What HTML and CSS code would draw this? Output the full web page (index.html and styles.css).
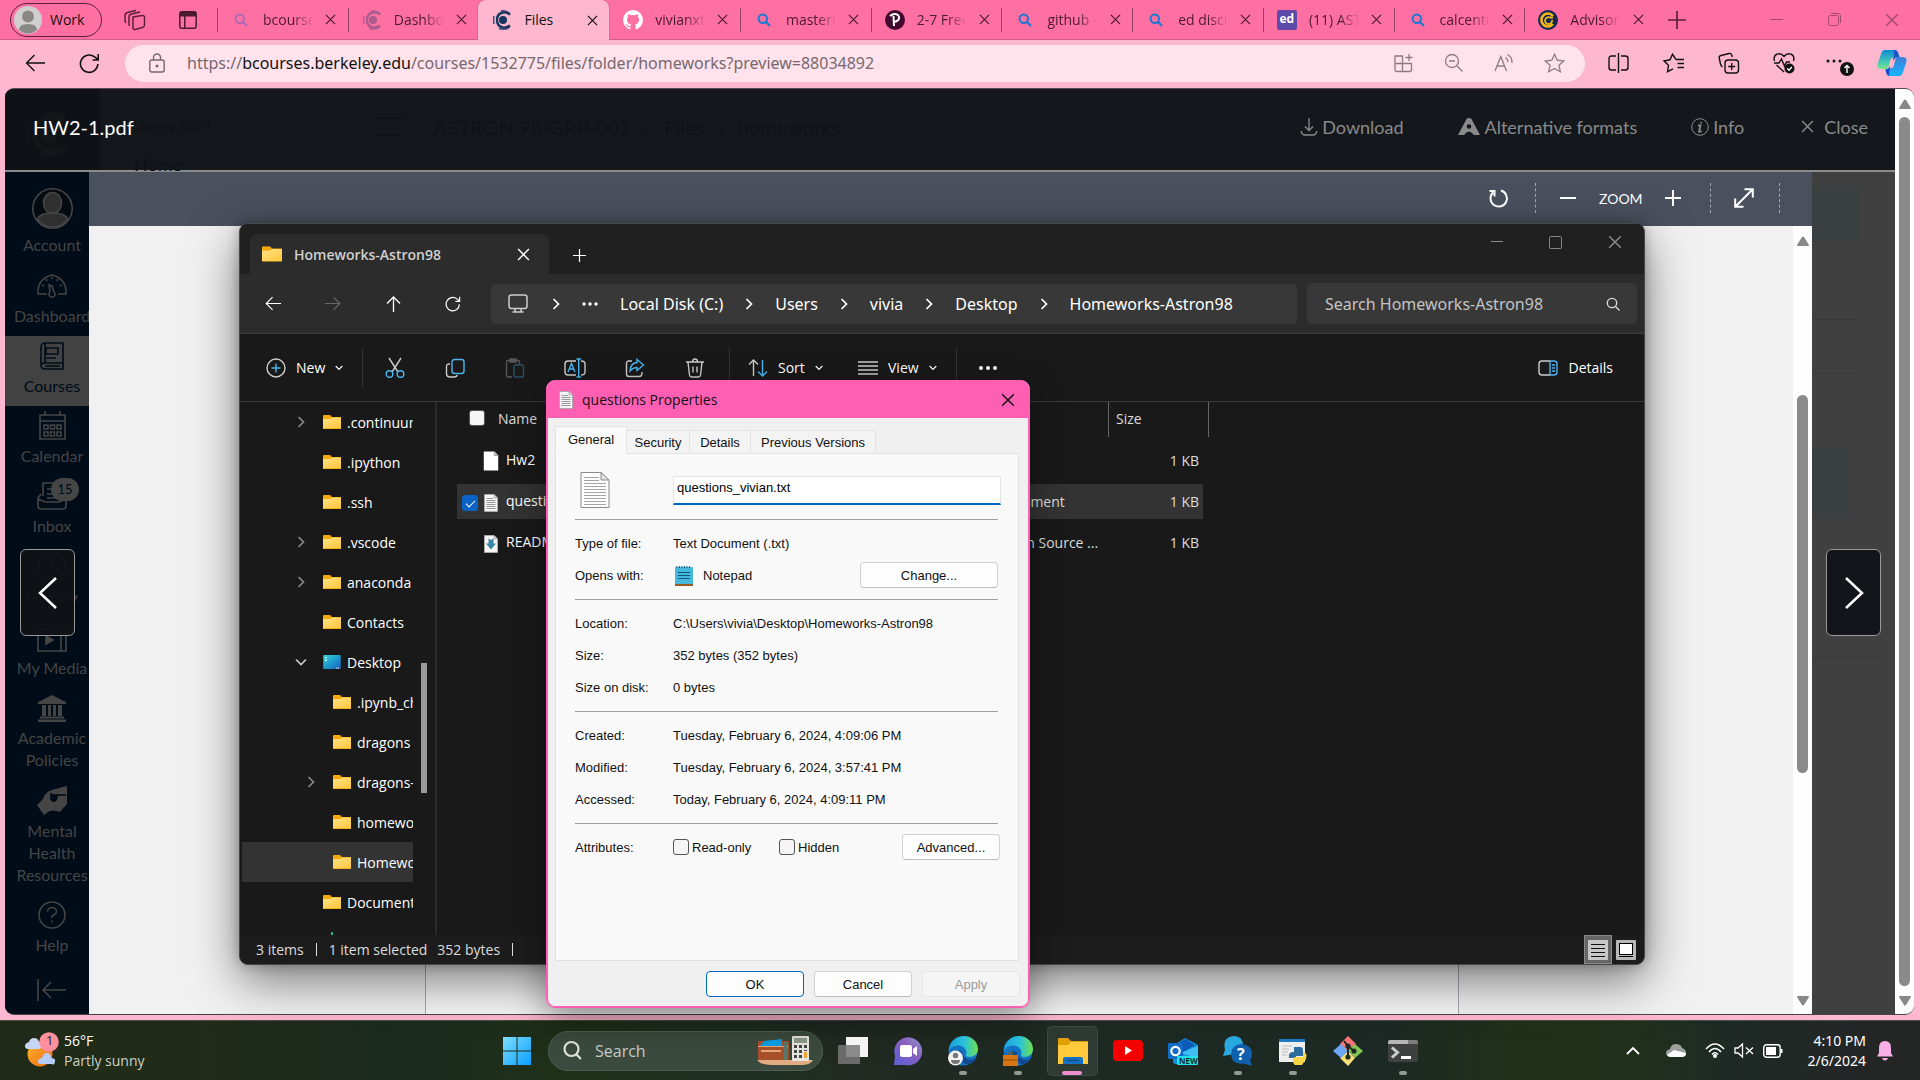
FILE: index.html
```html
<!DOCTYPE html>
<html lang="en">
<head>
<meta charset="utf-8">
<title>Files</title>
<link rel="stylesheet" href="styles.css">
</head>
<body>
<svg class="defs" aria-hidden="true">
  <defs>
    <linearGradient id="gFolder" x1="0" y1="0" x2="1" y2="1"><stop offset="0" stop-color="#ffe08a"/><stop offset="1" stop-color="#ffc83a"/></linearGradient>
    <linearGradient id="gDesk" x1="0" y1="0" x2="1" y2="1"><stop offset="0" stop-color="#35d3dc"/><stop offset="1" stop-color="#0d62c0"/></linearGradient>
    <linearGradient id="gWin" x1="0" y1="0" x2="1" y2="1"><stop offset="0" stop-color="#7fdfff"/><stop offset="1" stop-color="#0a9dff"/></linearGradient>
    <linearGradient id="gEdge" x1="0" y1="0" x2="1" y2="0"><stop offset="0" stop-color="#1a9fe0"/><stop offset=".55" stop-color="#2cc3d8"/><stop offset="1" stop-color="#6fe04e"/></linearGradient>
    <linearGradient id="gChat" x1="1" y1="0" x2="0" y2="1"><stop offset="0" stop-color="#8d97c9"/><stop offset=".4" stop-color="#8a5fc0"/><stop offset="1" stop-color="#5b5fd6"/></linearGradient>
    <linearGradient id="gCop1" x1="0" y1="0" x2="0" y2="1"><stop offset="0" stop-color="#0f8bd6"/><stop offset=".6" stop-color="#3fc6b8"/><stop offset="1" stop-color="#7fe38a"/></linearGradient>
    <linearGradient id="gCop2" x1="0" y1="0" x2="0" y2="1"><stop offset="0" stop-color="#3f7fd8"/><stop offset="1" stop-color="#16b3ff"/></linearGradient>
    <linearGradient id="gSun" x1="0" y1="0" x2="1" y2="1"><stop offset="0" stop-color="#fbb62c"/><stop offset="1" stop-color="#ef6a14"/></linearGradient>
  </defs>
  <symbol id="x" viewBox="0 0 12 12"><path d="M1 1 11 11M11 1 1 11" fill="none" stroke="currentColor" stroke-width="1.3"/></symbol>
  <symbol id="plus" viewBox="0 0 16 16"><path d="M8 0V16M0 8H16" fill="none" stroke="currentColor" stroke-width="1.5"/></symbol>
  <symbol id="mag" viewBox="0 0 14 14"><circle cx="5.8" cy="5.8" r="4.2" fill="none" stroke="currentColor" stroke-width="2"/><path d="M9 9 13 13" stroke="currentColor" stroke-width="2.2"/></symbol>
  <symbol id="cal" viewBox="0 0 18 20"><circle cx="10" cy="10" r="4" fill="currentColor"/><path d="M17 4.500Q14 2 10 2.500 4 3.500 4 10T10 17.500Q14 18 17 15.500" fill="none" stroke="currentColor" stroke-width="2.400"/><path d="M8 .8Q15 .3 17 4.500M6 18.500Q12 20.500 16.500 17M1 6Q0 10 1 14" fill="none" stroke="currentColor" stroke-width="1.600" opacity=".8"/></symbol>
  <symbol id="chevR" viewBox="0 0 8 12"><path d="M1.500 1 6.500 6 1.500 11" fill="none" stroke="currentColor" stroke-width="1.700"/></symbol>
  <symbol id="chevD" viewBox="0 0 8 6"><path d="M.7 1 4 4.300 7.300 1" fill="none" stroke="currentColor" stroke-width="1.200"/></symbol>
  <symbol id="left" viewBox="0 0 20 18"><path d="M20 9H1.500M9.500 1 1.500 9 9.500 17" fill="none" stroke="currentColor" stroke-width="1.400"/></symbol>
  <symbol id="reload" viewBox="0 0 20 20"><path d="M18 10.500A8.300 8.300 0 1 1 14.800 3.600L18 6M18.300 1V6.600H13" fill="none" stroke="currentColor" stroke-width="1.500"/></symbol>
  <symbol id="folder" viewBox="0 0 18 14"><path d="M0 1A1 1 0 0 1 1 0H7L9 2H18V14H0Z" fill="#f5a80c"/><path d="M0 4H7L9 2.500H18V13.200H0Z" fill="url(#gFolder)"/></symbol>
  <symbol id="doc" viewBox="0 0 14 18"><path d="M.5.5H10L13.500 4V17.500H.5Z" fill="#f4f4f4" stroke="#aaa"/><path d="M10 .5V4H13.500" fill="#ddd" stroke="#999" stroke-width=".7"/></symbol>
  <symbol id="lines" viewBox="0 0 14 18"><use href="#doc"/><path d="M2.500 4.500H9M2.500 6.500H11.500M2.500 8.500H11.500M2.500 10.500H11.500M2.500 12.500H11.500M2.500 14.500H11.500" stroke="#999"/></symbol>
  <symbol id="up" viewBox="0 0 12 10"><path d="M5 1Q6 0 7 1L12 9Q12 10 11 10H1Q0 10 0 9Z" fill="#888"/></symbol>
  <symbol id="edge" viewBox="0 0 30 30"><circle cx="15" cy="15" r="14.500" fill="#1273c4"/><path d="M1 15C1 6 8 0 16 0S30 6 30 13C30 18 26 21 21 21 17 21 18 18 18.500 17 18 11 13 9 9 9.500 5 10 2 12 1 15Z" fill="url(#gEdge)"/><path d="M10 14C8 22 14 29 21 28 25 27 28 24 28 22 22 26 14 22 14 16Z" fill="#12488f"/></symbol>
</svg>

<main class="browser">
  <header class="tabstrip">
    <div class="left-tools">
      <button class="profile"><svg width="28" height="28" viewBox="0 0 28 28"><circle cx="14" cy="14" r="14" fill="#d1cfcd"/><circle cx="14" cy="10.500" r="6" fill="#8a8886"/><path d="M5 24Q5 18 14 18T23 24Q14 31 5 24Z" fill="#8a8886"/></svg>Work</button>
      <button class="ic" aria-label="Workspaces"><svg width="22" height="22" viewBox="0 0 22 22" fill="none" stroke="#5b1f37" stroke-width="1.500"><path d="M9 8 18 6.500Q20.500 6 20.500 8.500V16Q20.500 18 18.500 18.500L11 20.500Q9 21 9 18.500ZM5.500 17Q5 16 5 15V8Q5 5.500 7.500 5L16 3M2 14Q1 13 1 11V6.500Q1 4 3.500 3.400L12 1.500"/></svg></button>
      <button class="ic" aria-label="Tab actions"><svg width="18" height="18" viewBox="0 0 18 18"><rect x=".8" y=".8" width="16.400" height="16.400" rx="2" fill="none" stroke="#4b1a2f" stroke-width="1.500"/><path d="M1 1H17V5.500H1ZM5 5H6.500V17H5Z" fill="#4b1a2f"/></svg></button>
    </div>
    <nav class="tabs" aria-label="Tabs">
      <div class="tab"><svg class="fav dim" viewBox="0 0 14 14"><use href="#mag"/></svg><span class="tt">bcourses</span><button aria-label="Close tab"><svg><use href="#x"/></svg></button></div>
      <div class="tab"><svg class="fav big dimc" viewBox="0 0 18 20"><use href="#cal"/></svg><span class="tt">Dashboard</span><button aria-label="Close tab"><svg><use href="#x"/></svg></button></div>
      <div class="tab active"><svg class="fav big navy" viewBox="0 0 18 20"><use href="#cal"/></svg><span class="tt">Files</span><button aria-label="Close tab"><svg><use href="#x"/></svg></button></div>
      <div class="tab"><svg class="fav big" viewBox="0 0 20 20"><circle cx="10" cy="10" r="10" fill="#fff"/><path d="M7.300 20V17Q4.500 17.500 3.500 15.500 3 14.500 2.300 14.200 4 14 5 15.500 6 16.500 7.500 16 7.600 15 8.200 14.500 4 14 4 9.800 4 8 5 6.900 4.700 5.600 5.200 4.300 6.500 4.400 7.700 5.300 10 4.800 12.400 5.300 13.500 4.400 14.900 4.300 15.400 5.600 15 6.900 16.100 8 16.100 9.800 16 14 11.800 14.500 12.700 15.200 12.700 16.500V20Z" fill="#ff70a2"/></svg><span class="tt">vivianxtra</span><button aria-label="Close tab"><svg><use href="#x"/></svg></button></div>
      <div class="tab"><svg class="fav blue" viewBox="0 0 14 14"><use href="#mag"/></svg><span class="tt">mastering</span><button aria-label="Close tab"><svg><use href="#x"/></svg></button></div>
      <div class="tab"><svg class="fav big" viewBox="0 0 20 20"><circle cx="10" cy="10" r="10" fill="#43082f"/><path d="M5 6Q9 2.500 13 5 16 9 11 11.500H9M8.500 6 9 16" fill="none" stroke="#fff" stroke-width="2"/></svg><span class="tt">2-7 Free R</span><button aria-label="Close tab"><svg><use href="#x"/></svg></button></div>
      <div class="tab"><svg class="fav blue" viewBox="0 0 14 14"><use href="#mag"/></svg><span class="tt">github - S</span><button aria-label="Close tab"><svg><use href="#x"/></svg></button></div>
      <div class="tab"><svg class="fav blue" viewBox="0 0 14 14"><use href="#mag"/></svg><span class="tt">ed discuss</span><button aria-label="Close tab"><svg><use href="#x"/></svg></button></div>
      <div class="tab"><span class="fav big ed">ed</span><span class="tt">(11) ASTR</span><button aria-label="Close tab"><svg><use href="#x"/></svg></button></div>
      <div class="tab"><svg class="fav blue" viewBox="0 0 14 14"><use href="#mag"/></svg><span class="tt">calcentral</span><button aria-label="Close tab"><svg><use href="#x"/></svg></button></div>
      <div class="tab"><svg class="fav big" viewBox="0 0 20 20"><circle cx="10" cy="10" r="10" fill="#12294d"/><path d="M15 6A6.500 6.500 0 1 0 15 14" fill="none" stroke="#f5b81c" stroke-width="2.600"/><path d="M14 10A3.500 3.500 0 1 1 12 7.500H15" fill="none" stroke="#f5b81c" stroke-width="1.800"/></svg><span class="tt">Advisors</span><button aria-label="Close tab"><svg><use href="#x"/></svg></button></div>
    </nav>
    <div class="winctl">
      <button aria-label="New tab" class="newtab"><svg width="18" height="18"><use href="#plus"/></svg></button>
      <button aria-label="Minimize"><svg width="13" height="13" viewBox="0 0 13 13"><path d="M0 6.500H13" stroke="currentColor"/></svg></button>
      <button aria-label="Restore"><svg width="13" height="13" viewBox="0 0 13 13" fill="none" stroke="currentColor"><rect x=".5" y="2.500" width="10" height="10" rx="2"/><path d="M3 .5H10Q12.500.5 12.500 3V10"/></svg></button>
      <button aria-label="Close"><svg width="14" height="14"><use href="#x"/></svg></button>
    </div>
  </header>

  <div class="toolbar">
    <button aria-label="Back"><svg width="20" height="18"><use href="#left"/></svg></button>
    <button aria-label="Refresh"><svg width="21" height="21"><use href="#reload"/></svg></button>
    <div class="address">
      <svg width="16" height="20" viewBox="0 0 16 20" fill="none" stroke="#76696e" stroke-width="1.400"><rect x=".8" y="7" width="14.400" height="12" rx="2"/><path d="M4.500 7V4.500A3.500 3.500 0 0 1 11.500 4.500V7"/><circle cx="8" cy="13" r=".8" fill="#76696e"/></svg>
      <span class="url">https://<b>bcourses.berkeley.edu</b>/courses/1532775/files/folder/homeworks?preview=88034892</span>
      <button aria-label="App available"><svg width="20" height="20" viewBox="0 0 20 20"><path d="M1 3H8.500V18.500H3Q1 18.500 1 16.500ZM1 10.500H17.500V16.500Q17.500 18.500 15.500 18.500H8.500M15 1V8M11.500 4.500H18.500"/></svg></button>
      <button aria-label="Zoom out"><svg width="20" height="20" viewBox="0 0 20 20"><circle cx="8" cy="8" r="6.500"/><path d="M13 13 18.500 18.500M5 8H11"/></svg></button>
      <button aria-label="Read aloud"><svg width="20" height="20" viewBox="0 0 20 20"><path d="M1 18 6.800 3.500 12.500 18M3 13H10.500M11.500 4.500Q14 6 14 9M13.500 1.500Q18.500 4.500 18 10"/></svg></button>
      <button aria-label="Favorite"><svg width="21" height="20" viewBox="0 0 21 20"><path d="M10.500 1.300 13.200 7.200 19.800 8 15 12.300 16.300 18.700 10.500 15.500 4.700 18.700 6 12.300 1.200 8 7.800 7.200Z"/></svg></button>
    </div>
    <div class="ext">
      <button aria-label="Split screen"><svg width="21" height="20" viewBox="0 0 21 20"><path d="M8 3H3.500Q1 3 1 5.500V14.500Q1 17 3.500 17H8M13 3H17.500Q20 3 20 5.500V14.500Q20 17 17.500 17H13M10.500 0V20"/></svg></button>
      <button aria-label="Favorites"><svg width="22" height="20" viewBox="0 0 22 20"><path d="M13 6.500H21M14.500 10.500H21M14.500 14.500H21M13 6.500 9.500 1.300 7 6.800 1 8 5.500 12.300 4.500 18.700 10 15.800"/></svg></button>
      <button aria-label="Collections"><svg width="22" height="22" viewBox="0 0 22 22"><rect x="7" y="8" width="13.500" height="13" rx="3"/><path d="M13.700 11V18M10.200 14.500H17.200M4.500 15Q3 14 2.500 12L1.200 6Q.8 4 3 3.500L11 1.500Q13 1 13.800 3L14.200 5"/></svg></button>
      <button aria-label="Browser essentials"><svg width="22" height="22" viewBox="0 0 22 22"><path d="M1.500 9Q0 4 4 2.200 8 .8 11 4.500 14 .8 18 2.200 22 4 20.500 9M3.500 13 11 20M1 11H6L8.500 7 11.500 14 13.500 10H17"/><circle cx="16.500" cy="16.500" r="5" fill="#111" stroke="none"/><path d="M14.200 16.500 16 18.200 18.800 15" stroke="#fff"/></svg></button>
      <button aria-label="Settings and more"><svg width="28" height="26" viewBox="0 0 28 26"><g fill="#111" stroke="none"><circle cx="3" cy="11" r="1.500"/><circle cx="9" cy="11" r="1.500"/><circle cx="15" cy="11" r="1.500"/><circle cx="22" cy="19" r="7"/></g><path d="M22 23V15.500M19.500 18 22 15.500 24.500 18" stroke="#fff"/></svg></button>
      <button aria-label="Copilot"><svg width="30" height="28" viewBox="0 0 30 28"><g stroke="none"><path d="M8 1H17Q21 1 20 5L18 9Q14 8 13 12L11 20H4Q-1 20 1 14L4 5Q5 1 8 1Z" fill="url(#gCop1)"/><path d="M22 27H13Q9 27 10 23L12 19Q16 20 17 16L19 8H26Q31 8 29 14L26 23Q25 27 22 27Z" fill="url(#gCop2)"/><path d="M17 1Q21 1 21.500 5L22.500 8H19L16 12Q17 7 17 1Z" fill="#1b55c8"/><path d="M8.500 20H11L13 17 12 27Q9 26 8.500 20Z" fill="#174bd0"/></g></svg></button>
    </div>
  </div>

  <section class="page">
    <div class="content">
      <div class="pvhead">
        <div class="ghost" aria-hidden="true"><svg class="gl" width="44" height="46" viewBox="0 0 18 20"><use href="#cal"/></svg><i>Spring 2024</i><em></em><span>ASTRON 98-GRP-001</span><span>›</span><span>Files</span><span>›</span><span>homeworks</span><small>Home</small></div>
        <h1>HW2-1.pdf</h1>
        <a href="#"><svg width="18" height="18" viewBox="0 0 18 18" fill="none" stroke="currentColor" stroke-width="1.300"><path d="M9 0V12M5 8.500 9 12.500 13 8.500M1 13Q2 17 5 17H13Q16 17 17 13"/></svg>Download</a>
        <a href="#" class="alt"><svg width="22" height="17" viewBox="0 0 22 17"><path d="M8.500 1Q11-1 13.500 1L22 17H16Q11 10 6 17H0Z" fill="currentColor"/><circle cx="11" cy="8.500" r="2.300" fill="#14181c"/></svg>Alternative formats</a>
        <a href="#" class="info"><svg width="18" height="18" viewBox="0 0 18 18" fill="none" stroke="currentColor"><circle cx="9" cy="9" r="8.300"/><path d="M7 7.500H9.500L8 13.500H10.500M10 4V5.500" stroke-width="1.800"/></svg>Info</a>
        <button class="close"><svg width="13" height="13"><use href="#x"/></svg>Close</button>
      </div>
      <div class="pvbody">
        <nav class="side" aria-label="Global"><ul>
          <li class="acc"><svg width="41" height="41" viewBox="0 0 41 41"><circle cx="20.500" cy="20.500" r="19.700" fill="#060b12" stroke="#454545" stroke-width="1.600"/><ellipse cx="20.500" cy="15" rx="9" ry="10.500" fill="#303030"/><path d="M5 31Q8 25 20.500 25T36 31Q30 39 20.500 39T5 31Z" fill="#303030"/></svg><a href="#">Account</a></li>
          <li><svg width="30" height="22" viewBox="0 0 30 22"><path d="M4 20H1Q0 5 15 1 30 5 29 20H21M4 20H10M15 12 12 11 13 18A3 3 0 1 0 17 18ZM5 11 7 12M9 5 10 7M15 3V5M21 5 20 7M25 11 23 12"/></svg><a href="#">Dashboard</a></li>
          <li class="on"><svg width="24" height="28" viewBox="0 0 24 28"><path d="M23 1H5Q1 1 1 5V23Q1 27 5 27H23V21H5Q1 21 1 24M23 1V27M6 6H18V12H6ZM6 16H16M5 24H20M5 1V21"/></svg><a href="#">Courses</a></li>
          <li><svg width="27" height="29" viewBox="0 0 27 29"><path d="M1 4H26V28H1ZM1 10H26M6 0V5M21 0V5M5 14H9V18H5ZM11.500 14H15.500V18H11.500ZM18 14H22V18H18ZM5 21H9V25H5ZM11.500 21H15.500V25H11.500ZM18 21H22V25H18Z"/></svg><a href="#">Calendar</a></li>
          <li><svg width="30" height="28" viewBox="0 0 30 28"><path d="M6 14V1H23V14M1 16 4 12M1 15V24Q1 27 4 27H26Q29 27 29 24V15L26 12M1 17 8 20H22L29 17M10 7H15M10 12H19M10 16H19"/></svg><span class="badge">15</span><a href="#">Inbox</a></li>
          <li><svg width="30" height="30" viewBox="0 0 30 30"><circle cx="15" cy="15" r="14"/><path d="M15 6V15L21 19"/></svg><a href="#">History</a></li>
          <li><svg width="30" height="29" viewBox="0 0 30 29"><path d="M1 6H24V28H1ZM24 6H29V28H24M5 6V1H14V6"/><path d="M9 13 16 17 9 21Z" fill="currentColor"/></svg><a href="#">My Media</a></li>
          <li><svg width="28" height="27" viewBox="0 0 28 27"><path d="M0 7 14 0 28 7V9H0ZM4 10H8V21H4ZM10 10H13V21H10ZM15 10H18V21H15ZM20 10H24V21H20ZM2 21.500H26V23.500H2ZM0 24.500H28V27H0Z" fill="currentColor" stroke="none"/></svg><a href="#">Academic Policies</a></li>
          <li><svg width="30" height="29" viewBox="0 0 30 29"><path d="M30 0V18L23 26Q15 23 11 26L7 29 0 19 6 13Q8 6 15 4L22 2ZM14 8V14Q17 18 20 14V9H30" fill="currentColor" stroke="none"/><path d="M14 7V13Q17 18 20 12V9H29" stroke="#000c18"/></svg><a href="#">Mental Health Resources</a></li>
          <li><svg width="28" height="28" viewBox="0 0 28 28"><circle cx="14" cy="14" r="13"/><path d="M9.500 10.500Q10 6.500 14 6.500T18.500 10.500Q18.500 13 14 15V17M14 19.500V21.500"/></svg><a href="#">Help</a></li>
          <li class="col"><svg width="30" height="22" viewBox="0 0 30 22"><path d="M1 0V22M29 11H6M14 3 6 11 14 19"/></svg></li>
        </ul></nav>
        <div class="viewer">
          <div class="vbar">
            <button aria-label="Rotate"><svg width="21" height="21" viewBox="0 0 21 21"><path d="M13 2.500A8.200 8.200 0 1 1 5 4.500M1.500 3H6.500V8.500"/></svg></button>
            <button aria-label="Zoom out" class="s"><svg width="16" height="16" viewBox="0 0 16 16"><path d="M0 8H16"/></svg></button>
            <span>ZOOM</span>
            <button aria-label="Zoom in" class="zin"><svg width="16" height="16" viewBox="0 0 16 16"><path d="M0 8H16M8 0V16"/></svg></button>
            <button aria-label="Full screen" class="s e"><svg width="20" height="20" viewBox="0 0 20 20"><path d="M2 18 18 2M10.500 1.200H18.800V9.500M1.200 10.500V18.800H9.500"/></svg></button>
          </div>
          <div class="vbody"><div class="sheet"></div><div class="sb in"><svg width="12" height="10"><use href="#up"/></svg><i></i><svg class="dn" width="12" height="10"><use href="#up"/></svg></div></div>
        </div>
        <div class="behind"><i></i><u></u><u></u><i class="b2"></i><u></u></div>
        <button class="pn prev" aria-label="Previous"><svg width="20" height="34" viewBox="0 0 20 34"><path d="M18 2 2 17 18 32"/></svg></button>
        <button class="pn next" aria-label="Next"><svg width="20" height="34" viewBox="0 0 20 34"><path d="M2 2 18 17 2 32"/></svg></button>
      </div>
    </div>
    <div class="sb out"><svg width="12" height="10"><use href="#up"/></svg><i></i><svg class="dn" width="12" height="10"><use href="#up"/></svg></div>
  </section>
</main>

<section class="explorer">
  <div class="ex-title">
    <div class="ex-tab"><svg width="20" height="16" viewBox="0 0 18 14"><use href="#folder"/></svg><b>Homeworks-Astron98</b><button aria-label="Close tab"><svg width="13" height="13"><use href="#x"/></svg></button></div>
    <button aria-label="New tab" class="ex-new"><svg width="13" height="13"><use href="#plus"/></svg></button>
    <div class="ex-ctl"><button aria-label="Minimize"><svg width="12" height="12" viewBox="0 0 12 12"><path d="M0 5.500H12" stroke="currentColor"/></svg></button><button aria-label="Maximize"><svg width="13" height="13" viewBox="0 0 13 13"><rect x=".5" y=".5" width="12" height="12" rx="1" fill="none" stroke="currentColor"/></svg></button><button aria-label="Close"><svg width="14" height="14"><use href="#x"/></svg></button></div>
  </div>
  <div class="ex-nav">
    <button aria-label="Back"><svg width="16" height="15" viewBox="0 0 20 18"><use href="#left"/></svg></button>
    <button aria-label="Forward" disabled><svg class="flip" width="16" height="15" viewBox="0 0 20 18"><use href="#left"/></svg></button>
    <button aria-label="Up"><svg width="15" height="16" viewBox="0 0 15 16"><path d="M7.500 16V1M1 7.500 7.500 1 14 7.500" fill="none" stroke="currentColor" stroke-width="1.300"/></svg></button>
    <button aria-label="Refresh"><svg width="16" height="16"><use href="#reload"/></svg></button>
    <div class="crumbs">
      <svg width="20" height="19" viewBox="0 0 20 19" fill="none" stroke="#ccc" stroke-width="1.500"><rect x="1" y="1" width="18" height="13.500" rx="2.500"/><path d="M7 15V18M13 15V18M4.500 18H15.500"/></svg>
      <svg class="c"><use href="#chevR"/></svg><svg class="dots" width="16" height="4" viewBox="0 0 16 4" fill="#fff"><circle cx="2" cy="2" r="1.700"/><circle cx="8" cy="2" r="1.700"/><circle cx="14" cy="2" r="1.700"/></svg><span>Local Disk (C:)</span><svg class="c"><use href="#chevR"/></svg><span>Users</span><svg class="c"><use href="#chevR"/></svg><span>vivia</span><svg class="c"><use href="#chevR"/></svg><span>Desktop</span><svg class="c"><use href="#chevR"/></svg><span>Homeworks-Astron98</span>
    </div>
    <label class="ex-search"><input type="text" placeholder="Search Homeworks-Astron98" aria-label="Search Homeworks-Astron98"><svg width="14" height="14" viewBox="0 0 14 14" fill="none" stroke="#ddd" stroke-width="1.300"><circle cx="6" cy="6" r="4.700"/><path d="M9.500 9.500 13.500 13.500"/></svg></label>
  </div>
  <div class="ex-cmd">
    <button class="new"><svg width="20" height="20" viewBox="0 0 20 20"><circle cx="10" cy="10" r="9" stroke="#ccc"/><path class="a" d="M10 5.500V14.500M5.500 10H14.500"/></svg>New<svg class="d"><use href="#chevD"/></svg></button>
    <i class="sep"></i>
    <button class="q" aria-label="Cut"><svg width="20" height="20" viewBox="0 0 20 20"><path d="M4 0 13 14M16 0 7 14"/><circle class="a" cx="4.500" cy="16" r="3.300"/><circle class="a" cx="15.500" cy="16" r="3.300"/></svg></button>
    <button class="q" aria-label="Copy"><svg width="20" height="20" viewBox="0 0 20 20"><path d="M5 6H4Q1.500 6 1.500 8.500V15.500Q1.500 19 5 19H9Q12 19 12 17"/><rect class="a" x="7" y="1.500" width="12" height="14" rx="2.500"/></svg></button>
    <button class="q" aria-label="Paste" disabled><svg width="20" height="20" viewBox="0 0 20 20"><path d="M7 19H3Q1.500 19 1.500 17.500V4Q1.500 2.500 3 2.500H13Q14.500 2.500 14.500 4V6M5 1H11V4H5Z"/><rect class="a" x="9" y="7" width="9.500" height="12" rx="1.500"/></svg></button>
    <button class="q" aria-label="Rename"><svg width="22" height="20" viewBox="0 0 22 20"><path d="M12 3H4Q1 3 1 6V14Q1 17 4 17H12M17 3Q21 3 21 6V14Q21 17 17 17"/><path class="a" d="M12.500 1H17M14.700 1V19M12.500 19H17M4 14 7.500 5.500 11 14M5.200 11H9.800"/></svg></button>
    <button class="q" aria-label="Share"><svg width="20" height="20" viewBox="0 0 20 20"><path d="M7 3H4Q1.500 3 1.500 5.500V16Q1.500 18.500 4 18.500H14Q17 18.500 17 15V14"/><path class="a" d="M12 1.500 18.500 7 12 12.500V9.500Q8 9.500 5 13 5.500 5 12 4.500Z"/></svg></button>
    <button class="q" aria-label="Delete"><svg width="20" height="20" viewBox="0 0 20 20"><path d="M1 4H19M3 4 4.500 17Q4.800 19 6.500 19H13.500Q15.200 19 15.500 17L17 4M7.500 4Q7.500 1 10 1T12.500 4M8 8.500V14.500M12 8.500V14.500"/></svg></button>
    <i class="sep two"></i>
    <button class="sort"><svg width="20" height="18" viewBox="0 0 20 18"><path d="M5.500 17V1M1 5.500 5.500 1 10 5.500"/><path class="a" d="M14.500 1V17M10 12.500 14.500 17 19 12.500"/></svg>Sort<svg class="d"><use href="#chevD"/></svg></button>
    <button class="view"><svg width="20" height="14" viewBox="0 0 20 14"><path d="M0 1H20M0 5H20M0 9H20M0 13H20"/></svg>View<svg class="d"><use href="#chevD"/></svg></button>
    <i class="sep"></i>
    <button class="more" aria-label="More"><svg width="20" height="6" viewBox="0 0 20 6"><g fill="#fff" stroke="none"><circle cx="3" cy="3" r="2"/><circle cx="10" cy="3" r="2"/><circle cx="17" cy="3" r="2"/></g></svg></button>
    <button class="det"><svg width="20" height="16" viewBox="0 0 20 16"><path d="M12 1H4Q1 1 1 4V12Q1 15 4 15H12"/><path class="a" d="M12 1H16Q19 1 19 4V12Q19 15 16 15H12ZM14 5H17M14 8H17M14 11H17"/></svg>Details</button>
  </div>
  <div class="ex-main">
    <ul class="tree">
      <li class="p"><svg class="c"><use href="#chevR"/></svg><svg class="f"><use href="#folder"/></svg>.continuum</li>
      <li><svg class="f"><use href="#folder"/></svg>.ipython</li>
      <li><svg class="f"><use href="#folder"/></svg>.ssh</li>
      <li class="p"><svg class="c"><use href="#chevR"/></svg><svg class="f"><use href="#folder"/></svg>.vscode</li>
      <li class="p"><svg class="c"><use href="#chevR"/></svg><svg class="f"><use href="#folder"/></svg>anaconda</li>
      <li><svg class="f"><use href="#folder"/></svg>Contacts</li>
      <li class="p"><svg class="c open" viewBox="0 0 8 12"><use href="#chevR"/></svg><svg class="f" viewBox="0 0 20 16"><rect width="20" height="16" rx="1" fill="url(#gDesk)"/><path d="M2 3H4M2 6H4M15 15H16M17 15H18" stroke="#fff" stroke-width="1.500"/></svg>Desktop</li>
      <li class="k"><svg class="f"><use href="#folder"/></svg>.ipynb_checkpoints</li>
      <li class="k"><svg class="f"><use href="#folder"/></svg>dragons</li>
      <li class="k p"><svg class="c"><use href="#chevR"/></svg><svg class="f"><use href="#folder"/></svg>dragons-2</li>
      <li class="k"><svg class="f"><use href="#folder"/></svg>homeworks</li>
      <li class="k sel"><svg class="f"><use href="#folder"/></svg>Homeworks-Astron98</li>
      <li><svg class="f"><use href="#folder"/></svg>Documents</li>
      <li class="dl"><svg width="20" height="20" viewBox="0 0 20 20"><path d="M9 0V14M3 8 9 14 15 8" fill="none" stroke="#1fb98a" stroke-width="2"/></svg></li>
    </ul>
    <div class="tsb"><i></i></div>
    <div class="files">
      <table>
        <colgroup><col class="c1"><col class="c2"><col class="c3"><col class="c4"><col class="c5"></colgroup>
        <thead><tr><th><input type="checkbox" aria-label="Select all"></th><th>Name</th><th>Type</th><th class="sz">Size</th><th class="end"></th></tr></thead>
        <tbody>
          <tr><td></td><td><svg width="16" height="20" viewBox="0 0 14 18"><path d="M.5.5H10L13.500 4V17.500H.5Z" fill="#fff"/><path d="M10 .5V4H13.500" fill="#ccc" stroke="#888" stroke-width=".7"/></svg>Hw2</td><td></td><td class="kb">1 KB</td></tr>
          <tr class="sel"><td><input type="checkbox" checked aria-label="Select questions"></td><td><svg width="16" height="18"><use href="#lines"/></svg>questions</td><td>Text Document</td><td class="kb">1 KB</td></tr>
          <tr><td></td><td><svg width="16" height="18" viewBox="0 0 14 18"><use href="#doc"/><path d="M4.500 3.500 7 5 9.500 3.500V8.500H12L7 14.500 2 8.500H4.500Z" fill="#3d86a5"/></svg>README</td><td>Markdown Source ...</td><td class="kb">1 KB</td></tr>
        </tbody>
      </table>
    </div>
  </div>
  <footer class="ex-status"><span>3 items</span><i></i><span>1 item selected</span><span>352 bytes</span><i></i>
    <button class="v1" aria-label="Details view"><svg width="20" height="20" viewBox="0 0 20 20"><rect width="20" height="20" rx="1" fill="#c8c8c8"/><path d="M3 4.500H17M3 8.500H17M3 12.500H17M3 16.500H17" stroke="#111"/></svg></button><button class="v2" aria-label="Large icons"><svg width="20" height="20" viewBox="0 0 20 20"><rect width="20" height="20" rx="1" fill="#b8b8b8"/><rect x="3.500" y="3.500" width="13" height="11" fill="#fff" stroke="#000"/><path d="M3 16.500H17" stroke="#000"/></svg></button>
  </footer>
</section>

<section class="dialog" role="dialog" aria-label="questions Properties">
  <header><svg width="14" height="18"><use href="#lines"/></svg><span>questions Properties</span><button aria-label="Close"><svg width="14" height="14"><use href="#x"/></svg></button></header>
  <div class="dtabs"><button class="on">General</button><button>Security</button><button>Details</button><button>Previous Versions</button></div>
  <form class="panel">
    <div class="row name"><svg width="30" height="36" viewBox="0 0 30 36"><path d="M1 .5H21L29 8V35.500H1Z" fill="#fdfdfd" stroke="#8a8a8a"/><path d="M21 .5V8H29Z" fill="#e4e4e4" stroke="#8a8a8a"/><path d="M4 5.500H19M4 8.500H19M4 11.500H26M4 14.500H26M4 17.500H26M4 20.500H26M4 23.500H26M4 26.500H26M4 29.500H26M4 32.500H26" stroke="#a5a5a5"/></svg><input type="text" value="questions_vivian.txt" aria-label="File name"></div>
    <hr>
    <div class="row"><span>Type of file:</span><span>Text Document (.txt)</span></div>
    <div class="row"><span>Opens with:</span><span class="np"><svg width="18" height="21" viewBox="0 0 18 21"><rect y="2" width="18" height="18" rx="1" fill="#45b9dd"/><path d="M0 20H18" stroke="#9a5b20" stroke-width="2"/><path d="M2 1V3M4.500 1V3M7 1V3M9.500 1V3M12 1V3M14.500 1V3" stroke="#1b5c80"/><path d="M3 7.500H15M3 10.500H15M3 13.500H15" stroke="#12587c" stroke-width="1.200"/></svg>Notepad</span><button type="button" class="chg">Change...</button></div>
    <hr>
    <div class="row"><span>Location:</span><span>C:\Users\vivia\Desktop\Homeworks-Astron98</span></div>
    <div class="row"><span>Size:</span><span>352 bytes (352 bytes)</span></div>
    <div class="row"><span>Size on disk:</span><span>0 bytes</span></div>
    <hr>
    <div class="row"><span>Created:</span><span>Tuesday, February 6, 2024, 4:09:06 PM</span></div>
    <div class="row"><span>Modified:</span><span>Tuesday, February 6, 2024, 3:57:41 PM</span></div>
    <div class="row"><span>Accessed:</span><span>Today, February 6, 2024, 4:09:11 PM</span></div>
    <hr>
    <div class="row"><span>Attributes:</span><label><input type="checkbox">Read-only</label><label><input type="checkbox">Hidden</label><button type="button" class="adv">Advanced...</button></div>
  </form>
  <div class="dbtn"><button class="ok">OK</button><button>Cancel</button><button disabled>Apply</button></div>
</section>

<footer class="taskbar">
  <button class="weather"><svg width="36" height="36" viewBox="0 0 36 36"><circle cx="15" cy="21" r="12.500" fill="url(#gSun)"/><path d="M3 16Q0 16 0 13T4 9Q5 5 9 5T14 9Q18 10 17 13T14 16Z" fill="#c5d6f5"/><path d="M16 31Q12 31 13 28T17 25Q18 20 22 20T26 25Q31 25 30 29T27 31Z" fill="#b5ccf5"/><circle cx="24" cy="9" r="9.800" fill="#ff8f9c"/></svg><b class="n">1</b><span>56°F<small>Partly sunny</small></span></button>
  <div class="apps">
    <button aria-label="Start"><svg width="30" height="30" viewBox="0 0 30 30"><path d="M1 1H14.500V14.500H1ZM15.500 1H29V14.500H15.500ZM1 15.500H14.500V29H1ZM15.500 15.500H29V29H15.500Z" fill="url(#gWin)"/></svg></button>
    <label class="search"><svg width="19" height="19" viewBox="0 0 19 19" fill="none" stroke="#dfe3df" stroke-width="2.200"><circle cx="8.500" cy="8" r="7"/><path d="M13 13 18 18"/></svg><input type="text" placeholder="Search" aria-label="Search"><svg width="56" height="30" viewBox="0 0 56 30"><path d="M0 24H56Q54 29 44 29H14Q4 29 0 24Z" fill="#e0ab80"/><rect x="1" y="5" width="31" height="19" rx="1" fill="#a9502c"/><path d="M3 10 7 5 25 3V10Z" fill="#0d9fe6"/><path d="M1 10H31V11H1ZM4 14H24V16H4Z" fill="#e8a878"/><rect x="27" y="6" width="3" height="18" fill="#537a6a"/><rect x="35" width="17" height="25" rx="1" fill="#e8e6e2"/><rect x="37" y="2" width="13" height="5" fill="#8b9a88"/><path d="M37 9H40V12H37ZM42 9H45V12H42ZM47 9H50V12H47ZM37 14H40V17H37ZM42 14H45V17H42ZM47 14H50V15H47ZM37 19H40V22H37ZM42 19H45V22H42Z" fill="#444"/><path d="M47 16H50V22H47Z" fill="#f3a52f"/></svg></label>
    <button aria-label="Task view"><svg width="30" height="30" viewBox="0 0 30 30"><rect x="8" y="1" width="22" height="20" fill="#f4f4f4"/><rect y="9" width="22" height="19" fill="#777" opacity=".85"/></svg></button>
    <button aria-label="Chat"><svg width="30" height="30" viewBox="0 0 30 30"><path d="M1 29 2 20A14 14 0 1 1 12 29Z" fill="url(#gChat)"/><rect x="7" y="9" width="12" height="12" rx="2" fill="#fff"/><path d="M20 13 24 10V20L20 17Z" fill="#fff"/></svg></button>
    <button aria-label="Edge profile" class="run"><svg width="30" height="30" viewBox="0 0 30 30"><use href="#edge"/><circle cx="7.500" cy="22" r="7.500" fill="#f2f2f2"/><circle cx="7.500" cy="19.500" r="2.700" fill="#777"/><path d="M3 24H12Q12 28 7.500 28T3 24Z" fill="#777"/></svg></button>
    <button aria-label="Edge work" class="run"><svg width="30" height="30" viewBox="0 0 30 30"><use href="#edge"/><rect y="19" width="15" height="11" fill="#d77613"/><path d="M5 19V17H10V19M0 24H15" fill="none" stroke="#8b4a0a"/></svg></button>
    <button aria-label="File Explorer" class="run cur"><svg width="30" height="28" viewBox="0 0 30 28"><path d="M0 2Q0 1 1 1H10L13 4H29Q30 4 30 5V10H0Z" fill="#e0a000"/><path d="M0 8H10L13 5H30V27H0Z" fill="#ffca3c"/><path d="M5 27V22Q5 20 7 20H23Q25 20 25 22V27Z" fill="#1372c4"/><path d="M9 23.500H21" stroke="#0b4a8a" stroke-width="1.500"/></svg></button>
    <button aria-label="YouTube"><svg width="30" height="22" viewBox="0 0 30 22"><rect width="30" height="21" rx="4" fill="#f40000"/><path d="M12 6 19 10.500 12 15Z" fill="#fff"/></svg></button>
    <button aria-label="Outlook"><svg width="30" height="30" viewBox="0 0 30 30"><path d="M5 10 17 2 30 9V26Q30 28 28 28H8Q5 28 5 25Z" fill="#1490df"/><path d="M8 9 17 3 27 9 14 17Z" fill="#0a5ab5"/><path d="M30 10V22L12 17Z" fill="#40bdf2"/><rect y="7" width="15" height="16" rx="1" fill="#0f6cc8"/><circle cx="7.500" cy="15" r="4.200" fill="none" stroke="#fff" stroke-width="2.200"/><rect x="9" y="20" width="21" height="9" rx="1" fill="#1fe3ea"/><text x="11" y="28" class="nw">NEW</text></svg></button>
    <button aria-label="Get Help" class="run"><svg width="30" height="30" viewBox="0 0 30 30"><path d="M0 20 2 14Q-1 1 11 0 20 0 20 10L12 18Z" fill="#29a9e0"/><path d="M29 30 21 27.500Q8 29 8 18 9 8 18.500 8 29 9 29 18 29 22 27 24Z" fill="#1160ae"/><text x="14" y="24" class="qm">?</text></svg></button>
    <button aria-label="Python" class="run"><svg width="30" height="30" viewBox="0 0 30 30"><rect x="1" y="3" width="26" height="23" fill="#eee"/><rect x="1" y="3" width="26" height="3" fill="#1c78c0"/><path d="M4 10H14M4 13H11M4 16H10M4 19H9" stroke="#bbb"/><path d="M16 11H22Q25 11 25 14V20H18V22H11Q10 16 15 16H16Z" fill="#2d6c9f"/><path d="M25 16Q30 17 28 23L24 29H17Q15 28 15 24 15 21 18 21H25Z" fill="#f9d548"/></svg></button>
    <button aria-label="Git"><svg width="30" height="30" viewBox="0 0 30 30"><path d="M15 0 23 8 15 15 7 8Z" fill="#f97575"/><path d="M22 8 30 15 22 22 15 15Z" fill="#84c458"/><path d="M15 15 22 22 15 30 7 22Z" fill="#fbdf7a"/><path d="M8 8 15 15 8 22 0 15Z" fill="#6ea6f5"/><path d="M11 5 15 10V21M15 10 21 15" stroke="#1d2a20" stroke-width="2" fill="none"/><g fill="#1d2a20"><circle cx="15" cy="10" r="2.600"/><circle cx="15" cy="21" r="2.600"/><circle cx="21" cy="15" r="2.600"/></g></svg></button>
    <button aria-label="Terminal" class="run"><svg width="30" height="22" viewBox="0 0 30 22"><rect width="30" height="22" rx="2" fill="#3f4040"/><path d="M0 4V2Q0 0 2 0H20V4Z" fill="#b5b5b5"/><path d="M20 0H28Q30 0 30 2V4H20Z" fill="#7d7d7d"/><path d="M4 7.500 9.500 12.500 4 17.500" fill="none" stroke="#ccc" stroke-width="3"/><rect x="13" y="16" width="10" height="3" fill="#fff"/></svg></button>
  </div>
  <div class="tray">
    <svg width="14" height="9" viewBox="0 0 14 9"><path d="M1 8 7 2 13 8" fill="none" stroke="#fff" stroke-width="1.800"/></svg>
    <svg class="cl" width="20" height="13" viewBox="0 0 20 13"><path d="M4 12Q0 12 0 9T4 5Q5 0 10 0T16 4Q20 5 20 9T16 12Z" fill="#9aa09a"/><path d="M1 11 8 6 20 9Q20 13 16 13H4Q2 13 1 11Z" fill="#fff"/></svg>
    <svg width="20" height="15" viewBox="0 0 20 15" fill="none" stroke="#fff" stroke-width="1.500"><path d="M1 6Q10-4 19 6M4 9Q10 2 16 9M7 11.500Q10 8 13 11.500"/><circle cx="10" cy="13" r="1.300" fill="#fff"/></svg>
    <svg width="20" height="15" viewBox="0 0 20 15" fill="none" stroke="#fff" stroke-width="1.300"><path d="M1 5H4L8.500 1V14L4 10H1ZM12 4.500 19 11M19 4.500 12 11"/></svg>
    <svg width="20" height="14" viewBox="0 0 20 14"><rect x=".7" y=".7" width="16.500" height="12.600" rx="3" fill="none" stroke="#fff" stroke-width="1.400"/><rect x="3" y="3" width="10" height="8" fill="#fff"/><path d="M18.500 5V9" stroke="#fff" stroke-width="2"/></svg>
    <time>4:10 PM<br>2/6/2024</time>
    <svg class="bell" width="16" height="20" viewBox="0 0 16 20"><path d="M0 15.500 2 12V7Q2 0 8 0T14 7V12L16 15.500ZM5 17H11Q10 19.500 8 19.500T5 17Z" fill="#f9aee8"/></svg>
  </div>
</footer>
</body>
</html>
```
FILE: styles.css
```css
* { box-sizing: border-box; }
html, body { height: 100%; }
body { margin: 0; display: flex; flex-direction: column; position: relative; overflow: hidden; background: #1c281b; font-family: "Open Sans", "Noto Sans", sans-serif; font-size: 14px; color: #111; }
button { border: 0; padding: 0; margin: 0; background: none; font: inherit; color: inherit; display: inline-flex; align-items: center; justify-content: center; flex: none; }
input { font: inherit; margin: 0; }
ul { list-style: none; margin: 0; padding: 0; }
svg { flex: none; display: block; overflow: visible; }
.defs { position: absolute; width: 0; height: 0; }

/* browser frame */
.browser { flex: 1; min-height: 0; display: flex; flex-direction: column; background: #fdb8cf; }
.tabstrip { height: 40px; display: flex; background: #ff70a2; border-bottom: 1px solid #cf5f8a; flex: none; }
.left-tools { width: 217px; display: flex; align-items: center; padding-left: 10px; }
.profile { width: 92px; height: 34px; border: 1px solid #5b1f37; border-radius: 17px; gap: 8px; justify-content: flex-start; padding-left: 3px; }
.left-tools .ic { width: 24px; margin-left: 21px; }
.left-tools .ic + .ic { margin-left: 29px; }
.tabs { flex: 1; display: flex; min-width: 0; }
.tab { flex: 1; min-width: 0; display: flex; align-items: center; padding-left: 13px; border-left: 1px solid transparent; background: linear-gradient(#94435f, #94435f) no-repeat 0 8px / 1px 24px; background-origin: border-box; color: #4b1a2f; }
.tab.active { background: #fdb8cf; border-radius: 8px 8px 0 0; height: 40px; color: #111; box-shadow: 0 0 2px #b04f76; clip-path: inset(-2px -2px 0 -2px); }
.tab.active + .tab { background: none; }
.fav { width: 14px; height: 14px; margin: 0 3px; }
.fav.big { width: 20px; height: 20px; margin: 0; }
.blue { color: #1778d2; }
.dim { color: #a86ab5; }
.dimc { color: #a95c8d; }
.navy { color: #16365f; }
.ed { background: #5d4aa8; color: #fff; font-weight: 700; font-size: 12px; line-height: 18px; text-align: center; border-radius: 2px; }
.tt { flex: 1; min-width: 0; margin-left: 12px; white-space: nowrap; overflow: hidden; line-height: 20px; -webkit-mask-image: linear-gradient(90deg, #000 60%, transparent); mask-image: linear-gradient(90deg, #000 60%, transparent); }
.active .tt { -webkit-mask-image: none; mask-image: none; }
.tab button { width: 32px; padding-left: 2px; margin-right: 2px; }
.tab button svg { width: 11px; height: 11px; }
.winctl { width: 265px; display: flex; align-items: center; color: #5b1f37; }
.winctl button { width: 58px; color: #a34a6c; }
.winctl .newtab { width: 44px; color: #5b1f37; margin-right: 48px; }
.toolbar { height: 48px; flex: none; display: flex; align-items: center; padding: 0 10px 2px 0; }
.toolbar > button { width: 54px; margin-left: 8px; }
.toolbar > button + button { width: 54px; margin: 0 9px 0 0; }
.address { flex: 1; height: 37px; border-radius: 19px; background: #ffe2eb; display: flex; align-items: center; padding: 0 6px 0 24px; }
.url { flex: 1; min-width: 0; overflow: hidden; white-space: nowrap; margin-left: 22px; font-family: "Noto Sans", sans-serif; font-size: 16px; line-height: 24px; color: #76696e; }
.url b { font-weight: 400; color: #111; }
.address button { width: 50px; }
.address button svg { fill: none; stroke: #8c7b82; stroke-width: 1.3; }
.ext { width: 325px; display: flex; align-items: center; padding-left: 6px; }
.ext button { width: 55px; }
.ext svg { fill: none; stroke: #111; stroke-width: 1.4; }
.ext button:last-child { width: 40px; margin-left: 6px; }

/* web page */
.page { flex: 1; min-height: 0; margin: 0 6px 5px 5px; display: flex; border-radius: 9px; overflow: hidden; background: #404040; border-top: 1px solid #5a4a50; border-bottom: 1px solid #444; }
.content { flex: 1; min-width: 0; display: flex; flex-direction: column; font-family: Lato, sans-serif; }
.pvhead { height: 83px; flex: none; position: relative; display: flex; align-items: center; background: linear-gradient(90deg, #0e1216 95px, #14181c 95px); border-bottom: 2px solid #8b8b8b; padding: 0 27px 6px 28px; font-size: 18px; color: #8a8a8a; }
.pvhead h1 { flex: 1; margin: 0; font-size: 20px; font-weight: 400; color: #fff; position: relative; }
.pvhead a, .pvhead .close { color: #8a8a8a; text-decoration: none; display: flex; align-items: center; gap: 4px; position: relative; }
.pvhead .alt { margin-left: 54px; gap: 5px; }
.pvhead .info { margin-left: 54px; }
.pvhead .close { margin-left: 57px; gap: 10px; }
.ghost { position: absolute; inset: 0; padding: 0 0 6px 134px; display: flex; align-items: center; gap: 14px; font-size: 20px; color: #0e1216; }
.ghost i { font-size: 14px; width: 80px; padding-bottom: 4px; }
.ghost em { width: 28px; height: 18px; margin: 0 16px 0 143px; border-top: 1px solid; border-bottom: 1px solid; }
.ghost small { position: absolute; left: 129px; top: 64px; font-size: 18px; }
.gl { position: absolute; left: 20px; top: 22px; color: #14171a; }
.pvbody { flex: 1; min-height: 0; display: flex; position: relative; }
.side { width: 84px; flex: none; background: #000c18; overflow: hidden; }
.side ul { width: 94px; }
.side li { color: #454545; font-size: 16px; line-height: 22px; text-align: center; display: flex; flex-direction: column; align-items: center; height: 70px; justify-content: flex-end; gap: 5px; padding-bottom: 9px; position: relative; }
.side li svg { fill: none; stroke: currentColor; stroke-width: 1.6; }
.side a { color: inherit; text-decoration: none; padding: 0 4px; }
.side li.acc { height: 94px; padding-bottom: 10px; }
.side li.on { background: #424242; color: #000c18; }
.side li:nth-child(2) { gap: 9px; }
.side li:nth-child(6), .side li:nth-child(7) { height: 71px; }
.side li:nth-child(8) { height: 92px; }
.side li:nth-child(9) { height: 115px; }
.side li:nth-child(9) a { width: 80px; }
.side li.col { height: 50px; padding-bottom: 14px; }
.badge { position: absolute; left: 46px; top: 2px; width: 28px; height: 23px; border-radius: 12px; background: #454545; color: #000c18; font-size: 13px; line-height: 22px; }
.viewer { flex: 1; min-width: 0; display: flex; flex-direction: column; }
.vbar { height: 54px; flex: none; background: #4a505e; color: #fff; display: flex; justify-content: flex-end; align-items: center; padding: 0 32px 2px 0; font-size: 14px; }
.vbar span { width: 42px; text-align: center; }
.vbar button { width: 64px; height: 30px; }
.vbar button:first-child { width: 74px; }
.vbar .s { border-left: 1px dashed #a4a8b0; }
.vbar .zin { width: 69px; padding-right: 6px; }
.vbar .e { border-right: 1px dashed #a4a8b0; width: 70px; padding-right: 3px; }
.vbar svg { fill: none; stroke: #fff; stroke-width: 2; }
.vbody { flex: 1; display: flex; background: #f1f1f1; }
.sheet { flex: 1; margin: 0 334px 0 336px; border: 1px solid #a4a8ae; border-width: 0 1px; background: #f6f6f6; }
.sb { width: 19px; flex: none; background: #fdfdfd; display: flex; flex-direction: column; align-items: center; padding: 10px 0 8px; }
.sb i { width: 11px; border-radius: 6px; background: #8a8a8a; }
.sb .dn { transform: rotate(180deg); margin-top: auto; }
.sb.in i { height: 378px; margin-top: 149px; }
.sb.out i { flex: 1; margin: 8px 0 10px; }
.behind { width: 83px; background: #404040; }
.behind i { display: block; width: 48px; height: 54px; margin-top: 14px; border-radius: 0 6px 6px 0; background: #3a3f3f; }
.behind u { display: block; height: 80px; border-bottom: 1px solid #393939; width: 48px; }
.behind u + u { height: 54px; }
.behind i.b2 { width: 38px; height: 70px; margin-top: 74px; }
.behind i + u:last-child { height: 140px; width: 66px; }
.pn { position: absolute; top: 377px; width: 55px; height: 87px; border: 1px solid #999; border-radius: 6px; background: rgba(15, 18, 22, .94); }
.pn svg { fill: none; stroke: #fff; stroke-width: 2.5; }
.prev { left: 15px; }
.next { right: 14px; }

/* file explorer window */
.explorer { position: absolute; left: 239px; top: 223px; width: 1406px; height: 742px; border: 1px solid #484848; border-radius: 9px; background: #191919; color: #fff; display: flex; flex-direction: column; overflow: hidden; box-shadow: 0 16px 48px rgba(0, 0, 0, .5), 0 0 12px rgba(0, 0, 0, .25); }
.ex-title { height: 50px; flex: none; background: #202020; display: flex; align-items: flex-end; padding-left: 10px; }
.ex-tab { width: 299px; height: 40px; background: #2c2c2c; border-radius: 8px 8px 0 0; display: flex; align-items: center; padding: 0 0 0 12px; }
.ex-tab b { flex: 1; font-weight: 600; font-size: 14px; margin-left: 12px; color: #d0d0d0; }
.ex-tab button { width: 52px; }
.ex-new { width: 60px; height: 38px; }
.ex-ctl { margin-left: auto; align-self: flex-start; display: flex; height: 36px; color: #888; }
.ex-ctl button { width: 59px; }
.ex-nav { height: 60px; flex: none; background: #2c2c2c; border-bottom: 1px solid #3d3d3d; display: flex; align-items: center; padding: 0 7px 0 3px; font-size: 16px; font-family: "Noto Sans", sans-serif; }
.ex-nav > button { width: 60px; }
.ex-nav button:disabled { color: #6a6a6a; }
.flip { transform: scaleX(-1); }
.crumbs { flex: 1; height: 40px; margin-left: 8px; background: #383838; border-radius: 5px; display: flex; align-items: center; gap: 22px; padding-left: 17px; white-space: nowrap; }
.crumbs .c { width: 8px; height: 12px; }
.crumbs > svg:first-child + .c { margin: 0 0 0 2px; }
.ex-search { width: 330px; height: 41px; margin-left: 10px; background: #383838; border-radius: 5px; display: flex; align-items: center; padding: 0 17px 0 18px; }
.ex-search input, .search input { flex: 1; min-width: 0; border: 0; background: none; color: #fff; padding: 0; outline: 0; }
.ex-search input::placeholder { color: #c4c4c4; opacity: 1; }
.ex-cmd { height: 68px; flex: none; display: flex; align-items: center; border-bottom: 1px solid #3a3a3a; padding: 0 31px 0 26px; }
.ex-cmd svg { fill: none; stroke: #ccc; stroke-width: 1.4; }
.ex-cmd svg .a { stroke: #4cb5f0; }
.ex-cmd svg.d { width: 8px; height: 6px; }
.ex-cmd button { gap: 10px; }
.ex-cmd .new { width: 96px; justify-content: flex-start; }
.ex-cmd .q { width: 60px; }
.ex-cmd .q:disabled { opacity: .35; }
.sep { width: 1px; height: 40px; background: #333; }
.sep.two { margin-left: 4px; }
.sep + .q { margin-left: 2px; }
.ex-cmd .sort { width: 110px; margin-left: 18px; justify-content: flex-start; }
.ex-cmd .view { width: 98px; justify-content: flex-start; }
.ex-cmd .more { width: 61px; }
.ex-cmd .det { margin-left: auto; }
.ex-main { flex: 1; min-height: 0; display: flex; }
.tree { width: 171px; flex: none; margin-left: 2px; overflow: hidden; font-size: 14px; }
.tree li { height: 40px; display: flex; align-items: center; padding-left: 81px; white-space: nowrap; gap: 6px; }
.tree li.k { padding-left: 91px; }
.tree li.p { padding-left: 55px; }
.tree li.p.k { padding-left: 65px; }
.tree .c { width: 8px; height: 12px; color: #8a8a8a; margin-right: 12px; }
.tree .open { transform: rotate(90deg); color: #ccc; }
.tree .f { width: 18px; height: 14px; }
.tree li.sel { background: #333; }
.tree li.dl { padding-top: 10px; align-items: flex-start; }
.tsb { width: 24px; border-right: 2px solid #2b2b2b; padding: 261px 9px 0 8px; }
.tsb i { display: block; width: 6px; height: 130px; background: #9a9a9a; }
.files { flex: 1; padding-left: 20px; min-width: 0; }
.files table { width: 752px; border-collapse: separate; border-spacing: 0 6px; table-layout: fixed; margin-top: -6px; }
.c1 { width: 26px; } .c2 { width: 445px; } .c3 { width: 180px; } .c4 { width: 95px; } .c5 { width: 6px; }
.files th { font-weight: 400; text-align: left; height: 35px; color: #ddd; padding: 0 0 3px; }
.files th:nth-child(2) { padding-left: 15px; }
.files th:first-child input { margin-left: 12px; display: block; }
.files th.sz { border-left: 1px solid #666; padding-left: 7px; }
.files th.end { border-right: 1px solid #666; }
.files td { height: 35px; padding: 0; color: #ddd; white-space: nowrap; }
.files td:nth-child(2) { color: #fff; }
.files td svg { display: inline-block; vertical-align: middle; margin-right: 7px; }
.files .kb { text-align: right; padding-right: 4px; }
.files td:nth-child(3) { padding-left: 37px; }
.files tr.sel td { background: #333; }
input[type=checkbox] { appearance: none; width: 16px; height: 16px; border: 1px solid #555; border-radius: 3px; background: #f5f5f5; display: inline-block; vertical-align: middle; flex: none; }
.files td input { margin-left: 5px; border: 0; position: relative; }
.files input:checked { background: #0a63c4; }
.files input:checked::after { content: ""; position: absolute; left: 4px; top: 5px; width: 8px; height: 4px; border: solid #fff; border-width: 0 0 1px 1px; transform: rotate(-45deg); }
.ex-status { height: 29px; flex: none; background: #1c1c1c; display: flex; align-items: center; padding: 0 8px 0 16px; font-size: 14px; color: #ddd; }
.ex-status i { width: 1px; height: 13px; background: #ddd; margin: 0 12px; }
.ex-status span + span { margin-left: 10px; }
.ex-status .v1 { margin-left: auto; width: 28px; height: 29px; background: #666; border: 1px solid #888; margin-right: 4px; }

/* properties dialog */
.dialog { position: absolute; left: 546px; top: 380px; width: 484px; height: 628px; border: 1px solid #ff5fb3; border-radius: 9px; background: #f0f0f0; overflow: hidden; font-family: "Liberation Sans", Arial, sans-serif; font-size: 13px; display: flex; flex-direction: column; box-shadow: 0 12px 36px rgba(0, 0, 0, .4), inset 0 0 0 1px #ff5fb3; }
.dialog header { height: 37px; flex: none; background: #ff5fb3; display: flex; align-items: center; padding-left: 12px; font-family: "Open Sans", "Noto Sans", sans-serif; font-size: 14px; gap: 9px; }
.dialog header span { flex: 1; }
.dialog header button { width: 43px; }
.dtabs { display: flex; align-items: flex-end; height: 36px; padding-left: 8px; flex: none; position: relative; margin-bottom: -1px; }
.dtabs button { height: 24px; padding: 0; border: 1px solid #e2e2e2; border-left: 0; background: #f3f3f3; }
.dtabs .on { height: 28px; width: 72px; padding-bottom: 2px; border-left: 1px solid #e2e2e2; border-bottom-color: #f9f9f9; background: #f9f9f9; }
.dtabs button:nth-child(2) { width: 63px; }
.dtabs button:nth-child(3) { width: 61px; }
.dtabs button:nth-child(4) { width: 125px; }
.panel { margin: 0 10px 0 8px; flex: 1; background: #f9f9f9; border: 1px solid #e2e2e2; padding: 19px 20px 0 19px; }
.row { height: 32px; display: flex; align-items: center; }
.row > span:first-child { width: 98px; }
.row.name { height: 34px; }
.row.name svg { margin: 0 63px 0 5px; }
.row.name input { width: 328px; height: 29px; margin-right: -4px; flex: none; border: 1px solid #e5e5e5; border-bottom: 2px solid #0067c0; background: #fff; padding: 0 3px 4px; outline: 0; }
.panel hr { height: 1px; border: 0; background: #a0a0a0; margin: 8px 0 7px; }
.panel .name + hr { margin-top: 12px; }
.np { display: flex; align-items: center; gap: 10px; padding-left: 2px; }
.panel button, .dbtn button { height: 26px; border: 1px solid #d0d0d0; border-bottom-color: #bbb; border-radius: 4px; background: #fdfdfd; }
.panel .chg { width: 138px; margin-left: auto; }
.panel .adv { width: 98px; margin: 0 -2px 0 auto; }
.panel label { display: flex; align-items: center; gap: 3px; width: 106px; }
.panel label + label { width: 80px; }
.dbtn { height: 46px; flex: none; display: flex; justify-content: flex-end; align-items: center; gap: 10px; padding-right: 9px; }
.dbtn button { width: 98px; }
.dbtn .ok { border-color: #0067c0; }
.dbtn button:disabled { color: #9a9a9a; border-color: #e6e6e6; background: #f5f5f5; }

/* taskbar */
.taskbar { height: 60px; flex: none; display: flex; align-items: center; border-top: 1px solid #4d4a4a; color: #fff; background: linear-gradient(90deg, #1f2a18 0, #212c18 10%, #1c2b20 20%, #1f3017 30%, #1d2f22 38%, #222a22 45%, #1e2a22 55%, #1c2924 72%, #203018 79%, #20301a 85%, #1e2a26 90%, #242626 97%); justify-content: space-between; }
.weather { position: relative; padding-left: 25px; gap: 3px; width: 490px; justify-content: flex-start; }
.weather span { text-align: left; line-height: 20px; font-size: 14px; }
.weather small { display: block; font-size: 14px; color: #ccd0c8; }
.weather .n { position: absolute; left: 46px; top: 0; font-size: 13px; font-weight: 400; color: #222; }
.apps { display: flex; align-items: center; flex: 1; }
.apps button { width: 55px; height: 50px; position: relative; }
.apps button:first-child { width: 54px; margin: 0 4px 0 0; }
.search { width: 275px; height: 40px; border-radius: 20px; background: #3b4a3e; border: 1px solid #515d53; display: flex; align-items: center; padding: 0 9px 0 14px; gap: 13px; font-size: 16px; margin-right: 2px; }
.search input::placeholder { color: #c8ccc8; opacity: 1; }
.apps .run::after { content: ""; position: absolute; bottom: 1px; left: 24px; width: 8px; height: 4px; border-radius: 2px; background: #919a94; }
.apps .cur { background: rgba(255, 255, 255, .08); box-shadow: inset 0 0 0 1px rgba(255, 255, 255, .08); border-radius: 5px; width: 51px; margin: 0 2px; }
.apps .cur::after { left: 15px; width: 20px; background: #ec8fd0; }
.nw { font: 700 8px "Open Sans", sans-serif; fill: #052b33; }
.qm { font: 700 16px "Open Sans", sans-serif; fill: #fff; }
.tray { display: flex; align-items: center; padding-right: 27px; gap: 9px; }
.tray .cl { margin: 0 10px 0 17px; }
.tray time { text-align: right; line-height: 20px; width: 74px; font-family: "Noto Sans", sans-serif; }
.tray .bell { margin-left: 2px; }
```
